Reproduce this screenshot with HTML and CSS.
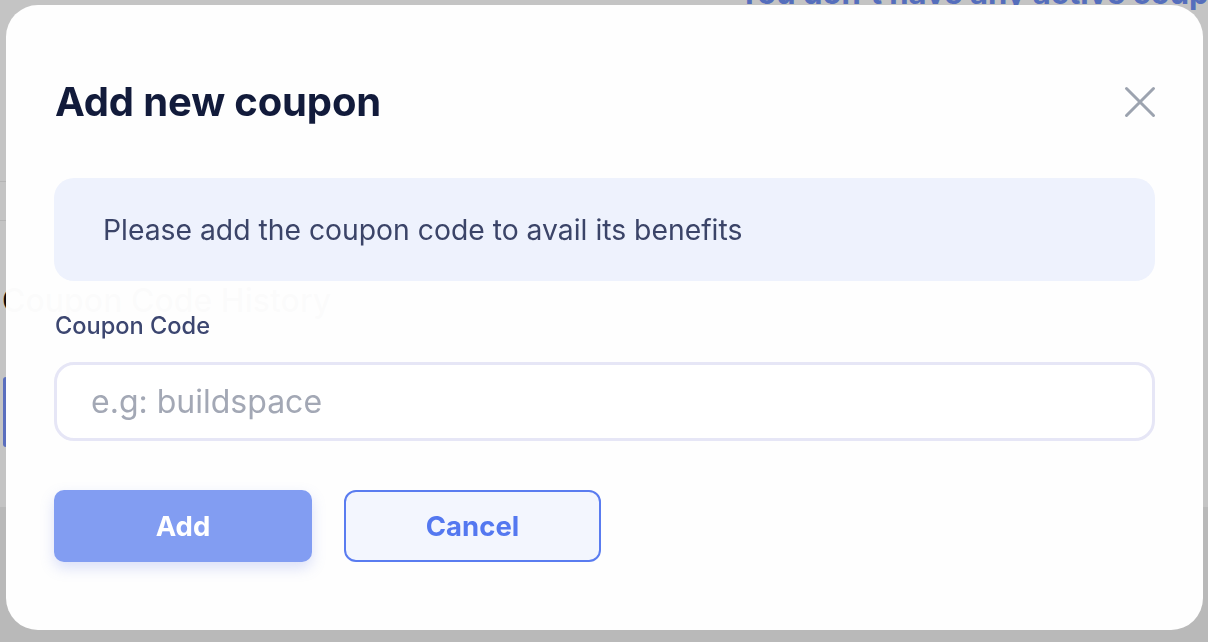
FILE: index.html
```html
<!DOCTYPE html>
<html lang="en">
<head>
<meta charset="utf-8">
<title>Add new coupon</title>
<link rel="stylesheet" href="styles.css">
</head>
<body>
<div class="page">
  <div class="page-top">You don't have any active coupons</div>
  <div class="page-card"></div>
  <h2 class="page-heading">Coupon Code History</h2>
  <div class="page-btn"></div>
  <div class="page-table"></div>
</div>
<div class="overlay">
  <div class="modal">
    <div class="modal-head">
      <h1 class="modal-title">Add new coupon</h1>
      <button class="close" aria-label="Close">
        <svg width="32" height="32" viewBox="0 0 32 32" fill="none" stroke="#9ca3af" stroke-width="3" stroke-linecap="round">
          <path d="M2.5 2.5L29.5 29.5M29.5 2.5L2.5 29.5"/>
        </svg>
      </button>
    </div>
    <div class="info">Please add the coupon code to avail its benefits</div>
    <label class="label" for="code">Coupon Code</label>
    <input class="input" id="code" type="text" placeholder="e.g: buildspace">
    <div class="actions">
      <button class="btn btn-add">Add</button>
      <button class="btn btn-cancel">Cancel</button>
    </div>
  </div>
</div>
</body>
</html>
```
FILE: styles.css
```css
* { box-sizing: border-box; }
html, body { margin: 0; height: 100%; }
body {
  font-family: Inter, "Noto Sans", "Liberation Sans", sans-serif;
  background: #ffffff;
  overflow: hidden;
}
.page {
  display: flex;
  flex-direction: column;
  margin-top: -25px;
}
.page-top {
  padding-left: 738px;
  white-space: nowrap;
  font-size: 31px;
  font-weight: 700;
  color: #6f8ff5;
  line-height: 36px;
}
.page-card {
  margin: 170px 0 0 -20px;
  width: 60px;
  height: 40px;
  border: 1px solid #ececec;
  border-radius: 12px;
}
.page-heading {
  margin: 62px 0 0 2px;
  font-size: 32px;
  font-weight: 500;
  color: #111111;
  line-height: 36px;
}
.page-btn {
  margin: 58px 0 0 3px;
  width: 3px;
  height: 70px;
  background: #7590f8;
  border-radius: 3px 0 0 3px;
}
.page-table {
  margin-top: 60px;
  height: 400px;
  background: #f1f1f1;
}
.overlay {
  position: fixed;
  inset: 0;
  background: rgba(0, 0, 0, 0.23);
  display: flex;
  align-items: flex-start;
  justify-content: flex-start;
  padding: 5px 5px 0 6px;
}
.modal {
  width: 1197px;
  height: 625px;
  background: rgba(255, 255, 255, 0.984);
  border-radius: 32px;
  padding: 0 48px;
  display: flex;
  flex-direction: column;
}
.modal-head {
  display: flex;
  align-items: center;
  justify-content: space-between;
  height: 173px;
  padding-top: 21px;
}
.modal-title {
  margin: 0 0 0 1px;
  font-size: 40px;
  font-weight: 700;
  color: #121b3b;
  letter-spacing: -0.15px;
  line-height: 48px;
}
.close {
  background: none;
  border: 0;
  padding: 0;
  margin-right: -1px;
  display: flex;
  cursor: pointer;
}
.info {
  background: #eef2fd;
  border-radius: 20px;
  height: 103px;
  display: flex;
  align-items: center;
  padding-left: 49px;
  font-size: 28.3px;
  color: #3b4468;
}
.label {
  margin: 33px 0 0 1px;
  font-size: 23.6px;
  font-weight: 500;
  color: #3c4670;
  line-height: 24px;
}
.input {
  margin-top: 24px;
  height: 79px;
  border: 3px solid #e6e6f6;
  border-radius: 20px;
  padding: 0 34px;
  font-family: inherit;
  font-size: 32px;
  color: #333;
  outline: none;
  background: #fff;
}
.input::placeholder { color: #a3a8b5; }
.actions {
  display: flex;
  gap: 32px;
  margin-top: 49px;
}
.btn {
  width: 258px;
  height: 72px;
  border-radius: 10px;
  font-family: inherit;
  font-size: 27.5px;
  font-weight: 700;
  cursor: pointer;
}
.btn-add {
  background: #829df2;
  color: #ffffff;
  border: 0;
  box-shadow: 0 6px 14px rgba(110, 130, 230, 0.25);
}
.btn-cancel {
  width: 257px;
  background: #f3f6fe;
  color: #5478f0;
  border: 2px solid #5a7cf0;
  border-radius: 12px;
}
```
